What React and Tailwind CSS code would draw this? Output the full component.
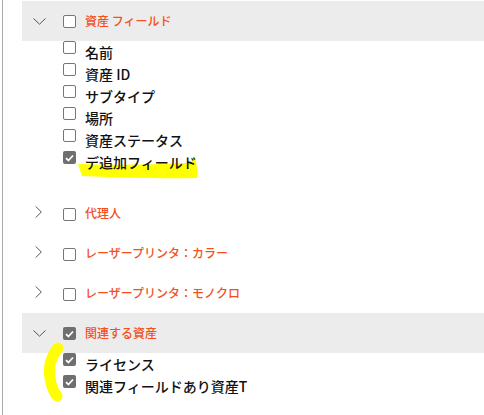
import React from 'react';

const FONT = { fontFamily: '"Noto Sans CJK JP", "Noto Sans", sans-serif' };

function Checkbox({ checked }) {
    return checked ? (
        <span className="relative z-[2] flex items-center justify-center w-[13px] h-[13px] rounded-[2px] bg-[#6f6f6f] shrink-0">
            <svg width="9" height="8" viewBox="0 0 9 8">
                <path d="M1 4.2 L3.4 6.5 L8 1.5" fill="none" stroke="#fff" strokeWidth="1.8" />
            </svg>
        </span>
    ) : (
        <span className="relative z-[2] block w-[13px] h-[13px] rounded-[2px] border border-[#767676] bg-white shrink-0" />
    );
}

function ChevronDown() {
    return (
        <svg width="13" height="7" viewBox="0 0 13 7" className="block">
            <path d="M0.5 0.5 L6.5 6.2 L12.5 0.5" fill="none" stroke="#555" strokeWidth="1" />
        </svg>
    );
}

function ChevronRight() {
    return (
        <svg width="7" height="12" viewBox="0 0 7 12" className="block">
            <path d="M0.8 0.5 L6.3 6 L0.8 11.5" fill="none" stroke="#555" strokeWidth="1" />
        </svg>
    );
}

function Header({ label, checked }) {
    return (
        <div className="h-10 bg-[#ececec] flex items-center">
            <div className="w-[41px] pl-[11px]">
                <ChevronDown />
            </div>
            <div className="mt-[1px]">
                <Checkbox checked={checked} />
            </div>
            <span className="relative z-[2] ml-[9px] text-[12px] font-medium text-[#f5501a]">{label}</span>
        </div>
    );
}

function Collapsed({ label }) {
    return (
        <div className="h-10 flex items-center">
            <div className="w-[41px] pl-[13px] -mt-[2px]">
                <ChevronRight />
            </div>
            <div className="mt-[2px]">
                <Checkbox />
            </div>
            <span className="relative z-[2] ml-[9px] text-[12px] font-medium text-[#f5501a]">{label}</span>
        </div>
    );
}

function Items({ items, className = '' }) {
    return (
        <div className={`pl-[41px] ${className}`}>
            {items.map(([label, checked]) => (
                <div key={label} className="h-[22px] flex items-start">
                    <Checkbox checked={checked} />
                    <span className="relative z-[2] ml-[9px] text-[14px] leading-[22px] font-medium text-[#111] mt-[0px]">{label}</span>
                </div>
            ))}
        </div>
    );
}

export default function App() {
    return (
        <div className="bg-white pl-[2px] min-h-[415px]" style={FONT}>
            <div className="relative border-l border-[#aaaaaa] min-h-[415px] pl-[19px] pt-[1px]">
                {/* marker annotations */}
                <svg className="absolute left-[-3px] top-0 z-[1] pointer-events-none" width="484" height="415">
                    <path d="M78 164 Q 130 166 188 163 Q 194 160 195 155 L 197 168 L 197 178 Q 140 179 82 176 Z" fill="#ffff00" />
                    <path d="M58 348 Q 47 362 50 378 Q 52 390 57 396" fill="none" stroke="#ffff00" strokeWidth="11" strokeLinecap="round" />
                </svg>

                <Header label="資産 フィールド" />
                <Items
                    className="pb-[20px]"
                    items={[
                        ['名前', false],
                        ['資産 ID', false],
                        ['サブタイプ', false],
                        ['場所', false],
                        ['資産ステータス', false],
                        ['デ追加フィールド', true],
                    ]}
                />
                <Collapsed label="代理人" />
                <Collapsed label="レーザープリンタ：カラー" />
                <Collapsed label="レーザープリンタ：モノクロ" />
                <Header label="関連する資産" checked />
                <Items
                    items={[
                        ['ライセンス', true],
                        ['関連フィールドあり資産T', true],
                    ]}
                />
            </div>
        </div>
    );
}
